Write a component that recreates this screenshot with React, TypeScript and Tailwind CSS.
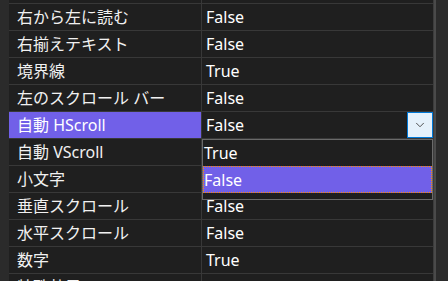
import { ChevronDown } from "lucide-react";

type Row = { label: string; value: string; covered?: boolean };

const rows: Row[] = [
    { label: "右から左に読む", value: "False" },
    { label: "右揃えテキスト", value: "False" },
    { label: "境界線", value: "True" },
    { label: "左のスクロール バー", value: "False" },
    { label: "自動 HScroll", value: "False" },
    // the open dropdown sits over these two values
    { label: "自動 VScroll", value: "True", covered: true },
    { label: "小文字", value: "False", covered: true },
    { label: "垂直スクロール", value: "False" },
    { label: "水平スクロール", value: "False" },
    { label: "数字", value: "True" },
    { label: "特殊効果", value: "" },
];

const SELECTED = 4;

function PropertyRow({ row, selected }: { row: Row; selected: boolean }) {
    return (
        <div className="flex h-[27px] shrink-0 border-b border-[#383838]">
            <div
                className={
                    selected
                        ? "flex w-[193px] items-center border-r border-[#383838] bg-[#7160e8] pl-[8px] text-white"
                        : "flex w-[193px] items-center border-r border-[#383838] pl-[8px] text-[#f1f1f1]"
                }
            >
                {row.label}
            </div>
            <div className="relative flex w-[231px] items-center pl-[4px] text-white">
                <span className={row.covered ? "invisible" : ""}>{row.value}</span>
                {selected && (
                    <div className="absolute right-0 top-0 flex h-[26px] w-[26px] items-center justify-center border border-[#0078d7] bg-[#e5f1fb]">
                        <ChevronDown className="h-[14px] w-[14px] text-[#3c3c3c]" strokeWidth={1.5} />
                    </div>
                )}
            </div>
        </div>
    );
}

export default function App() {
    return (
        <div
            className="relative flex h-[281px] w-[448px] overflow-hidden bg-[#1f1f1f] text-[16px]"
            style={{ fontFamily: '"Noto Sans", "Noto Sans CJK JP", sans-serif' }}
        >
            <div className="w-[9px] shrink-0 bg-[#2b2b2b]" />
            <div className="flex w-[425px] shrink-0 flex-col border-r border-[#3c3c3c]">
                <div className="flex h-[4px] shrink-0 border-b border-[#383838]">
                    <div className="w-[193px] border-r border-[#383838]" />
                </div>
                {rows.map((row, i) => (
                    <PropertyRow key={row.label} row={row} selected={i === SELECTED} />
                ))}
            </div>
            <div className="w-[2px] shrink-0 bg-[#4a4a4a]" />
            <div className="flex-1 bg-[#2b2b2b]" />

            {/* dropdown list */}
            <div className="absolute left-[202px] top-[139px] flex h-[61px] w-[231px] flex-col border border-[#6a6a6a] bg-[#1f1f1f] pb-[6px]">
                <div className="flex h-[26px] shrink-0 items-center pl-[1px] text-white">True</div>
                <div className="flex h-[27px] shrink-0 items-center border border-dotted border-[#ff8c00] bg-[#7160e8] text-white">
                    False
                </div>
            </div>
        </div>
    );
}
